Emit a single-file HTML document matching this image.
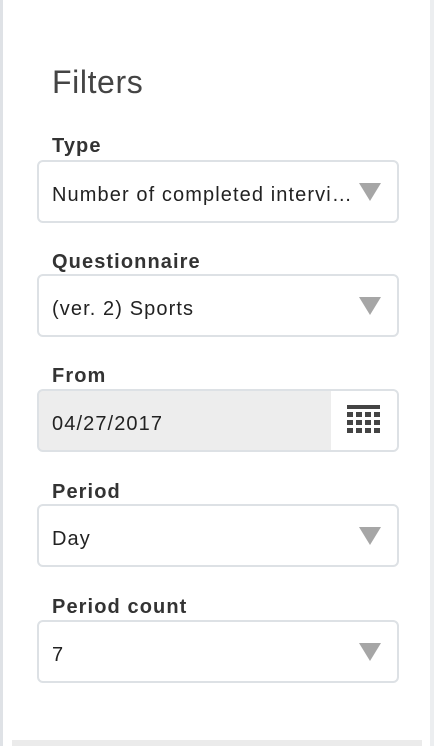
<!DOCTYPE html>
<html><head><style>
body{margin:0;width:434px;height:746px;background:#fff;position:relative;overflow:hidden;font-family:"Liberation Sans",Arial,sans-serif;color:#333}
.lb{position:absolute;left:0;top:0;width:3px;height:746px;background:#dfe2e6}
.rb{position:absolute;right:0;top:0;width:4px;height:746px;background:#eceef0}
.bot{position:absolute;left:12px;top:740px;width:410px;height:6px;background:#ebebeb}
h1{position:absolute;left:52px;top:64px;margin:0;font-size:32px;font-weight:300;color:#444;font-family:"Liberation Sans",sans-serif;letter-spacing:0.6px}
.lab{position:absolute;left:52px;font-weight:bold;font-size:20px;letter-spacing:1.1px;color:#333}
.box{position:absolute;left:37px;width:358px;height:59px;border:2px solid #dde1e5;border-radius:6px;background:#fff;box-sizing:content-box;overflow:hidden}
.box span{position:absolute;left:13px;top:22px;font-size:20px;letter-spacing:1.1px;color:#222;white-space:nowrap}
.arr{position:absolute;right:16px;top:21px;width:0;height:0;border-left:11px solid transparent;border-right:11px solid transparent;border-top:18px solid #a6a6a6}
.gray{background:#ededed}
.cal{position:absolute;right:0;top:0;width:66px;height:100%;background:#fff}
</style></head><body>
<div class="lb"></div><div class="rb"></div><div class="bot"></div>
<h1>Filters</h1>
<div class="lab" style="top:135px">Type</div>
<div class="box" style="top:160px"><span>Number of completed intervi…</span><div class="arr"></div></div>
<div class="lab" style="top:251px">Questionnaire</div>
<div class="box" style="top:274px"><span>(ver. 2) Sports</span><div class="arr"></div></div>
<div class="lab" style="top:365px">From</div>
<div class="box gray" style="top:389px"><span>04/27/2017</span>
<div class="cal"><svg width="66" height="59" viewBox="0 0 66 59">
<rect x="16" y="14" width="33" height="4" fill="#444"/>
<g fill="#444">
<rect x="16" y="21" width="6" height="5"/><rect x="25" y="21" width="6" height="5"/><rect x="34" y="21" width="6" height="5"/><rect x="43" y="21" width="6" height="5"/>
<rect x="16" y="29" width="6" height="5"/><rect x="25" y="29" width="6" height="5"/><rect x="34" y="29" width="6" height="5"/><rect x="43" y="29" width="6" height="5"/>
<rect x="16" y="37" width="6" height="5"/><rect x="25" y="37" width="6" height="5"/><rect x="34" y="37" width="6" height="5"/><rect x="43" y="37" width="6" height="5"/>
</g></svg></div></div>
<div class="lab" style="top:481px">Period</div>
<div class="box" style="top:504px"><span>Day</span><div class="arr"></div></div>
<div class="lab" style="top:596px">Period count</div>
<div class="box" style="top:620px"><span>7</span><div class="arr"></div></div>
</body></html>
